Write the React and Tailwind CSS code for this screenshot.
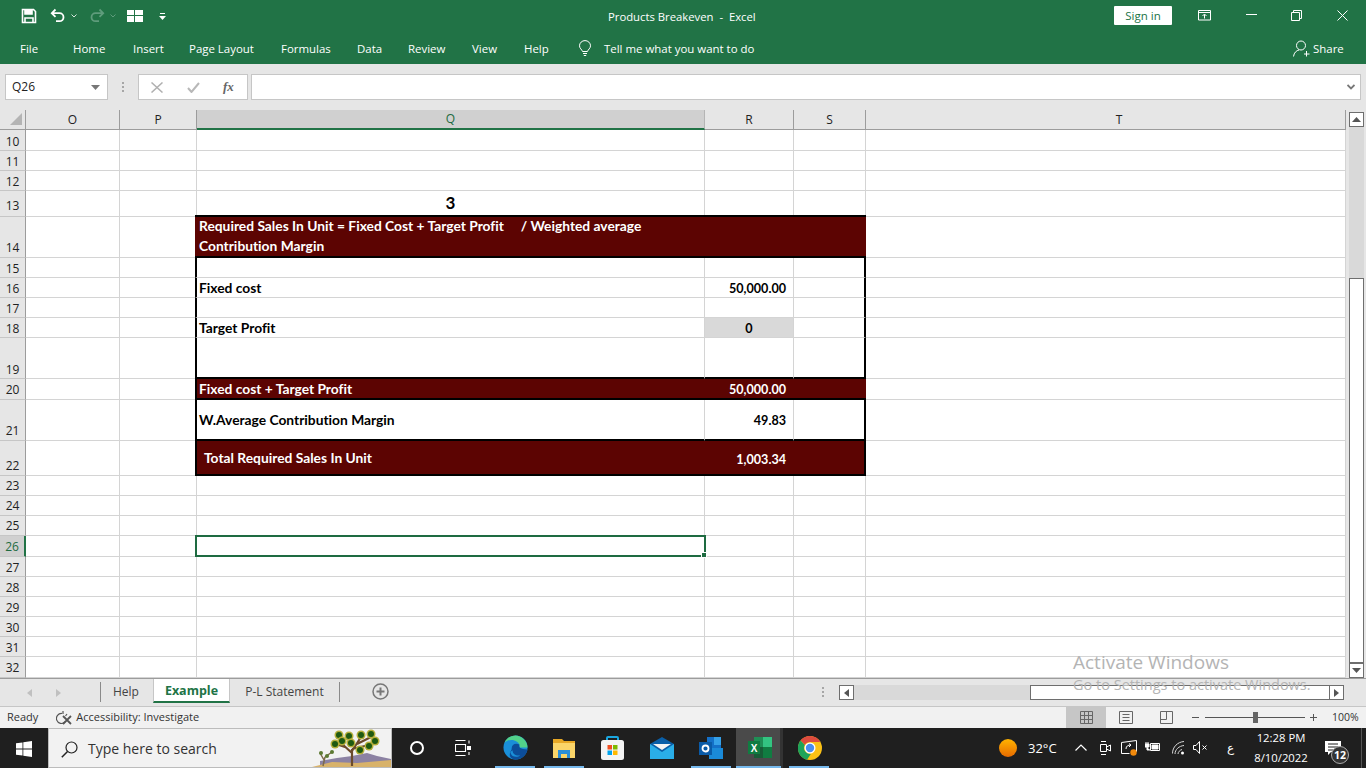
import { Fragment } from 'react';

const ui = 'font-["Open_Sans","Noto_Sans",sans-serif]';
const cellFont = 'font-["Lato",sans-serif] font-bold [font-variant-ligatures:none]';
const label = `text-[13.8px] ${cellFont}`;
const num = `text-[12.6px] ${cellFont}`;

const columns = [
  { name: 'O', w: 94 },
  { name: 'P', w: 77 },
  { name: 'Q', w: 508 },
  { name: 'R', w: 89 },
  { name: 'S', w: 72 },
  { name: 'T', w: 480 },
];

const heights = {
  10: 21, 11: 20, 12: 20, 13: 26, 14: 41, 15: 20, 16: 20, 17: 20, 18: 20, 19: 41, 20: 21, 21: 41, 22: 35,
  23: 20, 24: 20, 25: 20, 26: 21, 27: 20, 28: 20, 29: 20, 30: 20, 31: 20, 32: 21,
};

// row numbers do not sit at one fixed distance from the row line
const lowNumbers = [10, 11, 12, 15, 16, 17, 18, 19, 27, 28, 29, 30, 31];

function numberPad(n) {
  if (n === 13) return 'pb-[3px]';
  return lowNumbers.includes(n) ? 'pb-[1px]' : 'pb-[2px]';
}

function Blank({ w }) {
  return <div style={{ width: w }} className="shrink-0 border-r border-b border-[#d4d4d4]" />;
}

function Row({ n, children }) {
  const active = n === 26;
  return (
    <div style={{ height: heights[n] }} className="flex">
      <div className={`flex w-[26px] shrink-0 items-end justify-center border-b border-b-[#c6c6c6] text-[12px] leading-[14px] ${numberPad(n)} ${active ? 'border-r-2 border-r-[#217346] bg-[#d0d0d0] text-[#1e6b41]' : 'border-r border-r-[#9c9c9c] bg-[#e6e6e6] text-[#222]'}`}>
        {n}
      </div>
      <Blank w={94} />
      <Blank w={77} />
      {children || (
        <>
          <Blank w={508} />
          <Blank w={89} />
          <Blank w={72} />
        </>
      )}
      <Blank w={480} />
    </div>
  );
}

// left and right cells of the black outlined block
const leftCell = 'relative -ml-[2px] flex w-[510px] shrink-0 items-center border-b border-l-2 border-r border-[#d4d4d4] border-l-black pt-[2px] pl-[2px] text-black';
const leftCellEnd = 'relative -ml-[2px] flex w-[510px] shrink-0 items-center border-b-2 border-l-2 border-r border-r-[#d4d4d4] border-b-black border-l-black pt-[2px] pl-[2px] text-black';
const rightCell = 'w-[72px] shrink-0 border-r-2 border-b border-b-[#d4d4d4] border-r-black';
const rightCellEnd = 'w-[72px] shrink-0 border-r-2 border-b-2 border-black';

function SheetRows() {
  const dark = 'bg-[#5c0402] text-white';
  return (
    <>
      {[10, 11, 12].map((n) => <Row key={n} n={n} />)}
      <Row n={13}>
        <div className={`flex w-[508px] items-end justify-center border-r border-b border-[#d4d4d4] pb-[3px] text-[17px] leading-[20px] text-black ${cellFont}`}>3</div>
        <Blank w={89} />
        <Blank w={72} />
      </Row>
      <Row n={14}>
        <div className={`relative -mt-[2px] -ml-[2px] h-[43px] w-[671px] shrink-0 border-y-2 border-black pl-[4px] leading-[20px] whitespace-pre ${label} ${dark}`}>
          <div className="-mt-px">{'Required Sales In Unit = Fixed Cost + Target Profit     / Weighted average\nContribution Margin'}</div>
        </div>
      </Row>
      <Row n={15}>
        <div className={leftCell} />
        <Blank w={89} />
        <div className={rightCell} />
      </Row>
      <Row n={16}>
        <div className={`${leftCell} ${label}`}>Fixed cost</div>
        <div className={`flex w-[89px] shrink-0 items-center justify-end border-r border-b border-[#d4d4d4] pt-[4px] pr-[7px] text-black ${num}`}>50,000.00</div>
        <div className={rightCell} />
      </Row>
      <Row n={17}>
        <div className={leftCell} />
        <Blank w={89} />
        <div className={rightCell} />
      </Row>
      <Row n={18}>
        <div className={`${leftCell} ${label}`}>Target Profit</div>
        <div className={`flex w-[89px] shrink-0 items-center justify-center border-r border-b border-[#d4d4d4] bg-[#d9d9d9] pt-[4px] text-black ${num}`}>0</div>
        <div className={rightCell} />
      </Row>
      <Row n={19}>
        <div className={leftCellEnd} />
        <div className="w-[89px] shrink-0 border-r border-b-2 border-r-[#d4d4d4] border-b-black" />
        <div className={rightCellEnd} />
      </Row>
      <Row n={20}>
        <div className={`relative -ml-[2px] flex w-[671px] shrink-0 items-center justify-between border-b-2 border-l-2 border-black pt-[2px] pl-[2px] ${dark}`}>
          <span className={label}>Fixed cost + Target Profit</span>
          <span className={`mt-[2px] mr-[80px] ${num}`}>50,000.00</span>
        </div>
      </Row>
      <Row n={21}>
        <div className={`${leftCellEnd} ${label}`}>W.Average Contribution Margin</div>
        <div className={`flex w-[89px] shrink-0 items-center justify-end border-r border-b-2 border-r-[#d4d4d4] border-b-black pt-[4px] pr-[7px] text-black ${num}`}>49.83</div>
        <div className={rightCellEnd} />
      </Row>
      <Row n={22}>
        <div className={`relative -ml-[2px] flex w-[671px] shrink-0 items-center justify-between border-x-2 border-b-2 border-black pt-[2px] pl-[7px] ${dark}`}>
          <span className={label}>Total Required Sales In Unit</span>
          <span className={`mt-[3px] mr-[78px] ${num}`}>1,003.34</span>
        </div>
      </Row>
      {[23, 24, 25].map((n) => <Row key={n} n={n} />)}
      <Row n={26}>
        <div className="relative w-[508px] border-r border-b border-[#d4d4d4]">
          <div className="absolute -top-px -left-[2px] h-[22px] w-[511px] border-2 border-[#1e6b41]" />
          <div className="absolute -right-[3px] -bottom-[2px] h-[6px] w-[6px] border border-white bg-[#1e6b41]" />
        </div>
        <Blank w={89} />
        <Blank w={72} />
      </Row>
      {[27, 28, 29, 30, 31, 32].map((n) => <Row key={n} n={n} />)}
    </>
  );
}

function QuickAccess() {
  return (
    <div className="flex h-[32px] items-center pl-[21px] text-white">
      <svg width="16" height="16" viewBox="0 0 16 16" fill="none" stroke="white" strokeWidth="1.6">
        <path d="M1.5 1.5h11l2 2v11h-13z" />
        <path d="M4 1.5v4.5h7V1.5" fill="white" />
        <path d="M4 14.5V10h8v4.5" />
      </svg>
      <svg className="ml-[13px]" width="16" height="16" viewBox="0 0 16 16" fill="none" stroke="white" strokeWidth="1.8">
        <path d="M5.500 1.500 1.800 5.200l3.700 3.700M2 5.200h7.500a4 4 0 0 1 0 8H6" />
      </svg>
      <svg className="ml-[5px]" width="6" height="4" viewBox="0 0 6 4" fill="none" stroke="#d5e6dc"><path d="m.5.5 2.500 2.500L5.500.5" /></svg>
      <svg className="ml-[12px]" width="16" height="16" viewBox="0 0 16 16" fill="none" stroke="#5f9c7c" strokeWidth="1.8">
        <path d="M10.500 1.500l3.700 3.700-3.700 3.700M14 5.200H6.500a4 4 0 0 0 0 8H10" />
      </svg>
      <svg className="ml-[5px]" width="6" height="4" viewBox="0 0 6 4" fill="none" stroke="#5f9c7c"><path d="m.5.5 2.500 2.500L5.500.5" /></svg>
      <svg className="ml-[11px]" width="16" height="12" viewBox="0 0 16 12" fill="white">
        <path d="M0 0h7v5H0zM8 0h8v5H8zM0 6h7v6H0zM8 6h8v6H8z" />
      </svg>
      <svg className="ml-[16px]" width="7" height="7" viewBox="0 0 7 7" fill="white">
        <path d="M1 0h5v1H1zM0 3h7L3.500 7z" />
      </svg>
    </div>
  );
}

function TitleBar() {
  return (
    <div className="relative h-[32px] bg-[#217346]">
      <QuickAccess />
      <div className={`absolute top-[9px] left-[608px] text-[11.3px] leading-[16px] whitespace-pre text-white ${ui}`}>Products Breakeven  -  Excel</div>
      <div className={`absolute top-[6px] left-[1114px] flex h-[19px] w-[58px] items-center justify-center rounded-[1px] bg-white text-[11.5px] text-[#217346] ${ui}`}>Sign in</div>
      <svg className="absolute top-[10px] left-[1198px]" width="14" height="11" viewBox="0 0 14 11" fill="none" stroke="white">
        <path d="M.5.5h12v9.500H.5zM.5 2.500h12M6.500 8.500V4.500M4.500 6l2-2 2 2" />
      </svg>
      <svg className="absolute top-[14px] left-[1246px]" width="11" height="1" viewBox="0 0 11 1" fill="white"><path d="M0 0h11v1H0z" /></svg>
      <svg className="absolute top-[10px] left-[1291px]" width="11" height="11" viewBox="0 0 11 11" fill="none" stroke="white">
        <path d="M.5 2.500h8v8h-8zM2.500 2.500v-2h8v8h-2" />
      </svg>
      <svg className="absolute top-[10px] left-[1337px]" width="11" height="11" viewBox="0 0 11 11" fill="none" stroke="white">
        <path d="m.5.5 10 10M10.500.5l-10 10" />
      </svg>
    </div>
  );
}

const tabs = [
  ['Home', 73],
  ['Insert', 133],
  ['Page Layout', 189],
  ['Formulas', 281],
  ['Data', 357],
  ['Review', 408],
  ['View', 472],
  ['Help', 524],
];

function Ribbon() {
  return (
    <div className={`relative h-[32px] bg-[#217346] text-[11.45px] leading-[16px] text-white ${ui}`}>
      <span className="absolute top-[9px] left-[20px]">File</span>
      {tabs.map(([name, left]) => (
        <span key={name} style={{ left }} className="absolute top-[9px]">{name}</span>
      ))}
      <svg className="absolute top-[8px] left-[578px]" width="14" height="17" viewBox="0 0 14 17" fill="none" stroke="white">
        <path d="M4.500 11.500C4 9.500 1.500 8.500 1.500 5.800a5.500 5.200 0 0 1 11 0c0 2.700-2.500 3.700-3 5.700zM5 13.500h4M5.800 15.500h2.400" />
      </svg>
      <span className="absolute top-[9px] left-[604px]">Tell me what you want to do</span>
      <svg className="absolute top-[8px] left-[1293px]" width="17" height="17" viewBox="0 0 17 17" fill="none" stroke="white">
        <circle cx="8" cy="5.500" r="4.500" />
        <path d="M.5 16.500C1 12.500 3.500 10.500 6 10M11 14h5.500M13.500 11v5.500" />
      </svg>
      <span className="absolute top-[9px] left-[1313px]">Share</span>
    </div>
  );
}

function FormulaBar() {
  return (
    <div className={`flex h-[46px] items-start bg-[#e6e6e6] pt-[10px] ${ui}`}>
      <div className="ml-[5px] flex h-[26px] w-[103px] items-center justify-between border border-[#c6c6c6] bg-white pr-[7px] pl-[6px] text-[12px] text-[#222]">
        Q26
        <svg width="9" height="5" viewBox="0 0 9 5" fill="#777"><path d="M0 0h9L4.500 5z" /></svg>
      </div>
      <div className="mt-[8px] ml-[14px] flex h-[10px] w-[3px] flex-col justify-between">
        <span className="h-[2px] w-[2px] bg-[#a6a6a6]" />
        <span className="h-[2px] w-[2px] bg-[#a6a6a6]" />
        <span className="h-[2px] w-[2px] bg-[#a6a6a6]" />
      </div>
      <div className="ml-[13px] flex h-[26px] w-[110px] items-center border border-[#c6c6c6] bg-white">
        <svg className="ml-[12px]" width="12" height="11" viewBox="0 0 12 11" fill="none" stroke="#b0b0b0" strokeWidth="1.5"><path d="m.5.5 11 10M11.500.5l-11 10" /></svg>
        <svg className="ml-[24px]" width="13" height="11" viewBox="0 0 13 11" fill="none" stroke="#b8b8b8" strokeWidth="2"><path d="m1 6 3.500 4L12 1" /></svg>
        <span className="ml-[23px] font-['Liberation_Serif',serif] text-[13px] font-bold text-[#666] italic">fx</span>
      </div>
      <div className="ml-[3px] flex h-[26px] w-[1110px] items-center justify-end border border-[#c6c6c6] bg-white pr-[5px]">
        <svg width="8" height="6" viewBox="0 0 8 6" fill="none" stroke="#777" strokeWidth="1.8"><path d="m.5 1 3.500 3.500L7.500 1" /></svg>
      </div>
    </div>
  );
}

function ColumnHeaders() {
  return (
    <div className={`flex h-[20px] bg-[#e6e6e6] text-[12px] text-[#222] ${ui}`}>
      <div className="relative w-[26px] shrink-0 border-r border-b border-[#9c9c9c]">
        <div className="absolute right-[3px] bottom-[4px] h-0 w-0 border-b-[12px] border-l-[12px] border-b-[#b4b4b4] border-l-transparent" />
      </div>
      {columns.map((c) => (
        <div
          key={c.name}
          style={{ width: c.w }}
          className={`flex shrink-0 items-center justify-center border-r ${c.name === 'Q' ? 'border-b-2 border-r-[#b5b5b5] border-b-[#217346] bg-[#d0d0d0] text-[#1e6b41]' : 'border-b border-[#9c9c9c]'} ${c.name === 'T' ? 'pl-[27px]' : ''}`}
        >
          {c.name}
        </div>
      ))}
    </div>
  );
}

function VerticalScrollbar() {
  return (
    <div className="flex h-[568px] w-[20px] shrink-0 flex-col items-center bg-[#e6e6e6] pt-[2px]">
      <div className="flex h-[15px] w-[15px] items-center justify-center border border-[#6e6e6e] bg-white">
        <svg width="9" height="5" viewBox="0 0 9 5" fill="#555"><path d="M4.500 0 9 5H0z" /></svg>
      </div>
      <div className="h-[151px] w-[15px] bg-[#d9d9d9]" />
      <div className="h-[385px] w-[15px] border border-[#6e6e6e] bg-white" />
      <div className="mt-auto flex h-[15px] w-[15px] items-center justify-center border border-[#6e6e6e] bg-white">
        <svg width="9" height="5" viewBox="0 0 9 5" fill="#555"><path d="M0 0h9L4.500 5z" /></svg>
      </div>
    </div>
  );
}

function SheetTabs() {
  return (
    <div className={`relative flex h-[29px] items-start border-t border-b border-t-[#9c9c9c] border-b-[#c6c6c6] bg-[#e6e6e6] text-[12px] text-[#444] ${ui}`}>
      <svg className="mt-[10px] ml-[27px]" width="5" height="8" viewBox="0 0 5 8" fill="#c0c0c0"><path d="M5 0v8L0 4z" /></svg>
      <svg className="mt-[10px] ml-[24px]" width="5" height="8" viewBox="0 0 5 8" fill="#c0c0c0"><path d="M0 0v8l5-4z" /></svg>
      <div className="mt-[3px] ml-[39px] flex h-[20px] items-center border-x border-[#8a8a8a] pr-[14px] pl-[12px]">Help</div>
      <div className="-ml-px flex h-[24px] w-[77px] items-center justify-center border-x border-b-2 border-[#c6c6c6] border-b-[#217346] bg-white pt-[3px] text-[12.5px] font-bold text-[#217346]">Example</div>
      <div className="mt-[3px] flex h-[20px] w-[110px] items-center justify-center border-r border-[#8a8a8a]">P-L Statement</div>
      <svg className="mt-[4px] ml-[32px]" width="17" height="17" viewBox="0 0 17 17" fill="none" stroke="#777" strokeWidth="1.5">
        <circle cx="8.500" cy="8.500" r="7.500" />
        <path d="M8.500 4.500v8M4.500 8.500h8" strokeWidth="2" />
      </svg>
      <div className="absolute top-[8px] left-[822px] flex h-[10px] w-[3px] flex-col justify-between">
        <span className="h-[2px] w-[2px] bg-[#a6a6a6]" />
        <span className="h-[2px] w-[2px] bg-[#a6a6a6]" />
        <span className="h-[2px] w-[2px] bg-[#a6a6a6]" />
      </div>
      <div className="absolute top-[6px] left-[839px] flex h-[15px] w-[505px]">
        <div className="flex h-[15px] w-[15px] items-center justify-center border border-[#6e6e6e] bg-white">
          <svg width="5" height="8" viewBox="0 0 5 8" fill="#555"><path d="M5 0v8L0 4z" /></svg>
        </div>
        <div className="w-[176px] bg-[#d9d9d9]" />
        <div className="w-[300px] border border-[#6e6e6e] bg-white" />
        <div className="-ml-px flex h-[15px] w-[15px] items-center justify-center border border-[#6e6e6e] bg-white">
          <svg width="5" height="8" viewBox="0 0 5 8" fill="#555"><path d="M0 0v8l5-4z" /></svg>
        </div>
      </div>
    </div>
  );
}

function StatusBar() {
  return (
    <div className={`relative flex h-[21px] items-center bg-[#f1f1f1] text-[11px] text-[#333] ${ui}`}>
      <span className="ml-[7px]">Ready</span>
      <svg className="ml-[18px]" width="17" height="14" viewBox="0 0 17 14" fill="none" stroke="#555" strokeWidth="1.2">
        <path d="M6 2.500A5 5 0 1 0 9 11M7 0v3M11 3 9.500 5" />
        <path d="m7 5 8 8M15 5l-8 8" strokeWidth="1.8" />
      </svg>
      <span className="ml-[3px]">Accessibility: Investigate</span>
      <div className="absolute top-0 left-[1066px] flex h-[21px] w-[40px] items-center justify-center bg-[#c6c6c6]">
        <svg width="13" height="13" viewBox="0 0 13 13" fill="none" stroke="#666"><path d="M.5.5h12v12H.5zM4.500.5v12M8.500.5v12M.5 4.500h12M.5 8.500h12" /></svg>
      </div>
      <svg className="absolute top-[4px] left-[1119px]" width="14" height="13" viewBox="0 0 14 13" fill="none" stroke="#666"><path d="M.5.5h13v12H.5zM3.500 3.500h7M3.500 6.500h7M3.500 9.500h7" /></svg>
      <svg className="absolute top-[4px] left-[1160px]" width="13" height="13" viewBox="0 0 13 13" fill="none" stroke="#666"><path d="M.5.5h12v12H.5zM.5 8.500h6V.5" /></svg>
      <div className="absolute top-[10px] left-[1192px] h-px w-[7px] bg-[#555]" />
      <div className="absolute top-[10px] left-[1205px] h-px w-[100px] bg-[#555]" />
      <div className="absolute top-[5px] left-[1253px] h-[11px] w-[5px] bg-[#666]" />
      <svg className="absolute top-[7px] left-[1310px]" width="7" height="7" viewBox="0 0 7 7" fill="none" stroke="#555"><path d="M0 3.500h7M3.500 0v7" /></svg>
      <span className="absolute top-[3px] left-[1332px] text-[10.5px]">100%</span>
    </div>
  );
}

// joshua tree doodle at the right end of the search box
function TreeSearch() {
  const canopy = [[32, 6], [42, 7], [54, 6], [64, 5], [68, 12], [62, 17], [53, 21], [44, 14], [35, 12], [28, 15]];
  return (
    <svg className="absolute right-0 bottom-0" width="84" height="38" viewBox="0 0 84 38">
      <path d="M13 32 30 29 45 27 60 24 70 27 84 30V38H13z" fill="#8c82a3" />
      <path d="M5 38 25 33 50 34 84 31V38z" fill="#d8b26a" />
      <path d="M45 37V20M45 24 34 14M45 22 54 8M45 20 62 16M38 18 29 15M50 15 66 7" stroke="#6b4a2c" strokeWidth="2.2" fill="none" />
      <path d="M16 37 18 28M17 31 13 24M18 28 25 23" stroke="#7c6a4a" strokeWidth="1.5" fill="none" />
      {canopy.map(([x, y]) => (
        <Fragment key={`${x}-${y}`}>
          <circle cx={x} cy={y} r="4.500" fill="#b4ae3a" />
          <circle cx={x} cy={y} r="3" fill="#1e5a12" />
        </Fragment>
      ))}
      {[[14, 24], [25, 23], [20, 27]].map(([x, y]) => <circle key={x} cx={x} cy={y} r="2" fill="#5c7a32" />)}
    </svg>
  );
}

function TaskIcons() {
  return (
    <>
      {/* cortana ring and task view */}
      <div className="absolute top-[13px] left-[410px] h-[14px] w-[14px] rounded-full border-[2px] border-white" />
      <svg className="absolute top-[12px] left-[455px]" width="16" height="16" viewBox="0 0 16 16" fill="none" stroke="white" strokeWidth="1.1">
        <path d="M.5.5h10M.5 15.500h10M.5 4.500h10v7H.5zM14 .5v3M14 12v3" />
        <path d="M12.500 6.500h3v3h-3z" fill="white" />
      </svg>
      {/* edge */}
      <svg className="absolute top-[7px] left-[503px]" width="25" height="25" viewBox="0 0 26 26">
        <circle cx="13" cy="13" r="12.500" fill="#1a8fd8" />
        <path d="M25.500 13C25.500 6 19 .5 13 .5 8 .5 3.500 3.500 1.500 8c3-3 9-4 13-1 3 2 3.500 5 2.500 6z" fill="#52d18a" />
        <path d="M9 14c0-4 4-6 8-4-1 3 1 5 8.500 5-1 6-6.500 10.500-12.500 10.500-3 0-6-2-6-5 0-3 2-5 2-6z" fill="#0c4d99" />
        <path d="M10 16c0 4 4 6 8 5-3 3-9 2-10-2-1-1 1-3 2-3z" fill="#1a8fd8" />
      </svg>
      {/* file explorer */}
      <svg className="absolute top-[11px] left-[553px]" width="22" height="19" viewBox="0 0 22 19">
        <path d="M0 0h9l2 2h11v17H0z" fill="#e8a825" />
        <path d="M0 4h22v15H0z" fill="#fbd569" />
        <path d="M5 11h12v8h-3v-4H8v4H5z" fill="#2b8fd8" />
      </svg>
      {/* store */}
      <svg className="absolute top-[8px] left-[601px]" width="23" height="24" viewBox="0 0 23 24">
        <path d="M6 6V2a1 1 0 0 1 1-1h9a1 1 0 0 1 1 1v4" fill="none" stroke="#1aa7e0" strokeWidth="2" />
        <rect x="0" y="4" width="23" height="20" rx="2.500" fill="#f4f4f4" />
        <path d="M6.500 9H11v4.500H6.500z" fill="#f25022" />
        <path d="M12 9h4.500v4.500H12z" fill="#7fba00" />
        <path d="M6.500 14.500H11V19H6.500z" fill="#00a4ef" />
        <path d="M12 14.500h4.500V19H12z" fill="#ffb900" />
      </svg>
      {/* mail */}
      <svg className="absolute top-[9px] left-[650px]" width="24" height="22" viewBox="0 0 24 22">
        <path d="M12 0 24 7v15H0V7z" fill="#0a5fa8" />
        <path d="M3 7h18l-9 6z" fill="#f4f4f4" />
        <path d="M0 7 12 15 24 7v15H0z" fill="#2aaee8" />
      </svg>
      {/* outlook */}
      <svg className="absolute top-[9px] left-[699px]" width="24" height="22" viewBox="0 0 24 22">
        <path d="M8 0h14v18H8z" fill="#1470c8" />
        <path d="M15 0h7v8h-7z" fill="#35a0e8" />
        <path d="M10 11h14v11H10z" fill="#1a8ad8" />
        <path d="M0 5h13v13H0z" fill="#0a5ba8" />
        <circle cx="6.500" cy="11.500" r="3" fill="none" stroke="white" strokeWidth="1.8" />
      </svg>
      {/* excel, active */}
      <div className="absolute top-0 left-[736px] h-[40px] w-[44px] bg-[#4a4a4a]" />
      <div className="absolute top-0 left-[780px] h-[40px] w-[3px] bg-[#333]" />
      <svg className="absolute top-[9px] left-[748px]" width="24" height="21" viewBox="0 0 24 21">
        <path d="M6 0h18v21H6z" fill="#1f8f55" />
        <path d="M15 0h9v10h-9z" fill="#33c481" />
        <path d="M6 10h9v11H6z" fill="#185c37" />
        <path d="M15 10h9v11h-9z" fill="#107c41" />
        <path d="M0 4h12v13H0z" fill="#107c41" />
        <text x="6" y="14.500" textAnchor="middle" fontSize="10" fontWeight="700" fill="white" fontFamily="Liberation Sans, sans-serif">X</text>
      </svg>
      {/* chrome */}
      <svg className="absolute top-[8px] left-[798px]" width="24" height="24" viewBox="0 0 24 24">
        <circle cx="12" cy="12" r="12" fill="#fbc116" />
        <path d="M12 0a12 12 0 0 1 10.400 6H12a6 6 0 0 0-5.200 3L2.500 4.500A12 12 0 0 1 12 0z" fill="#dd4b3e" />
        <path d="M2.500 4.500 6.800 9a6 6 0 0 0 6 8.900L9 23.700A12 12 0 0 1 2.500 4.500z" fill="#1ea45a" />
        <circle cx="12" cy="12" r="5.500" fill="white" />
        <circle cx="12" cy="12" r="4.200" fill="#4a8df0" />
      </svg>
      {/* running app markers */}
      {[[495, 40], [544, 40], [691, 40], [736, 45], [789, 40]].map(([left, width]) => (
        <div key={left} style={{ left, width }} className="absolute bottom-0 h-[2px] bg-[#76b9ed]" />
      ))}
    </>
  );
}

function Tray() {
  return (
    <>
      <div className="absolute top-[11px] left-[999px] h-[18px] w-[18px] rounded-full bg-gradient-to-b from-[#ffb300] to-[#e66a00]" />
      <span className="absolute top-[11px] left-[1028px] text-[13px] leading-[18px] text-white">32°C</span>
      <svg className="absolute top-[16px] left-[1075px]" width="12" height="7" viewBox="0 0 12 7" fill="none" stroke="white" strokeWidth="1.2"><path d="m.5 6.500 5.500-5.500 5.500 5.500" /></svg>
      <svg className="absolute top-[12px] left-[1099px]" width="13" height="16" viewBox="0 0 13 16" fill="none" stroke="white">
        <path d="M1.500 4.500h6v7h-6zM7.500 7l4-2v6l-4-2M2 1.500h5M2 14.500h5" />
      </svg>
      <svg className="absolute top-[11px] left-[1121px]" width="17" height="18" viewBox="0 0 17 18" fill="none" stroke="white">
        <path d="M.5 3.500 15.500 1.500v11h-3M.5 3.500v11h8M5 10c0-3 2-4 5-4M8 4.500 10 6 8 8" />
        <circle cx="12.500" cy="13.500" r="3.200" fill="#f28a0c" stroke="none" />
      </svg>
      <svg className="absolute top-[13px] left-[1145px]" width="16" height="12" viewBox="0 0 16 12" fill="none" stroke="white">
        <path d="M5.500 2.500h9v7h-9z" />
        <path d="M7 4h6v4H7zM1 3V1M3 3V1M0 3h4v3H0zM2 6v3h3" fill="white" />
      </svg>
      <svg className="absolute top-[13px] left-[1172px]" width="13" height="14" viewBox="0 0 13 14" fill="none" stroke="#d8d8d8">
        <path d="M.5 12.500C.5 6 5.500 1 12 .5M3 13c0-4.500 4-8 9-8.500M6 13c0-2 2-4 4-4.500" />
        <circle cx="10.500" cy="12" r="1.500" fill="white" stroke="none" />
      </svg>
      <svg className="absolute top-[13px] left-[1193px]" width="15" height="13" viewBox="0 0 15 13" fill="none" stroke="white">
        <path d="M.5 4.500H3L6.500.5v12L3 8.500H.5zM9.500 4.500l4 4M13.500 4.500l-4 4" />
      </svg>
      <span className="absolute top-[11px] left-[1227px] text-[12px] leading-[18px] text-white">ع</span>
      <div className="absolute top-0 left-[1246px] flex h-[38px] w-[70px] flex-col items-center justify-center pt-[1px] text-[11.3px] leading-[20px] text-white">
        <span>12:28 PM</span>
        <span>8/10/2022</span>
      </div>
      <svg className="absolute top-[13px] left-[1325px]" width="16" height="14" viewBox="0 0 16 14" fill="white">
        <path d="M0 0h16v11H6l-3 3v-3H0z" />
        <path d="M3 3h10M3 6h10M3 9h10" stroke="#1c1c1c" />
      </svg>
      <div className="absolute top-[18px] left-[1331px] flex h-[18px] w-[18px] items-center justify-center rounded-full border border-[#aaa] bg-[#333] text-[10.5px] leading-none font-bold text-white">12</div>
      <div className="absolute top-0 left-[1361px] h-[40px] w-px bg-[#555]" />
    </>
  );
}

function Taskbar() {
  return (
    <div className={`relative h-[40px] overflow-hidden bg-[#1f1f1f] ${ui}`}>
      <svg className="absolute top-[13px] left-[16px]" width="16" height="16" viewBox="0 0 16 16" fill="white">
        <path d="M0 2.300 6.500 1.400v6.200H0zM7.300 1.300 16 0v7.600H7.300zM0 8.400h6.500v6.200L0 13.700zM7.300 8.400H16V16l-8.700-1.300z" />
      </svg>
      <div className="absolute top-0 left-[48px] h-[40px] w-[344px] border border-[#bcbcbc] bg-[#f2f2f2]">
        <svg className="absolute top-[12px] left-[12px]" width="17" height="17" viewBox="0 0 17 17" fill="none" stroke="#222" strokeWidth="1.2">
          <circle cx="10.500" cy="6.500" r="5.500" />
          <path d="M6.500 10.500.8 16.200" strokeWidth="1.5" />
        </svg>
        <span className="absolute top-[10px] left-[39px] text-[14px] leading-[20px] text-[#333]">Type here to search</span>
        <TreeSearch />
      </div>
      <TaskIcons />
      <Tray />
    </div>
  );
}

export default function App() {
  return (
    <div className="relative h-[768px] w-[1366px] overflow-hidden bg-white">
      <TitleBar />
      <Ribbon />
      <FormulaBar />
      <div className="flex h-[568px]">
        <div className={`w-[1346px] shrink-0 overflow-hidden text-[#222] ${ui}`}>
          <ColumnHeaders />
          <SheetRows />
        </div>
        <VerticalScrollbar />
      </div>
      <SheetTabs />
      <StatusBar />
      <Taskbar />
      {/* watermark sits on top of everything */}
      <div className={`pointer-events-none absolute top-[650px] left-[1073px] text-[#b4b4b4] ${ui}`}>
        <div className="text-[19px] leading-[24px]">Activate Windows</div>
        <div className="mt-[1px] text-[14.5px] leading-[20px]">Go to Settings to activate Windows.</div>
      </div>
    </div>
  );
}
